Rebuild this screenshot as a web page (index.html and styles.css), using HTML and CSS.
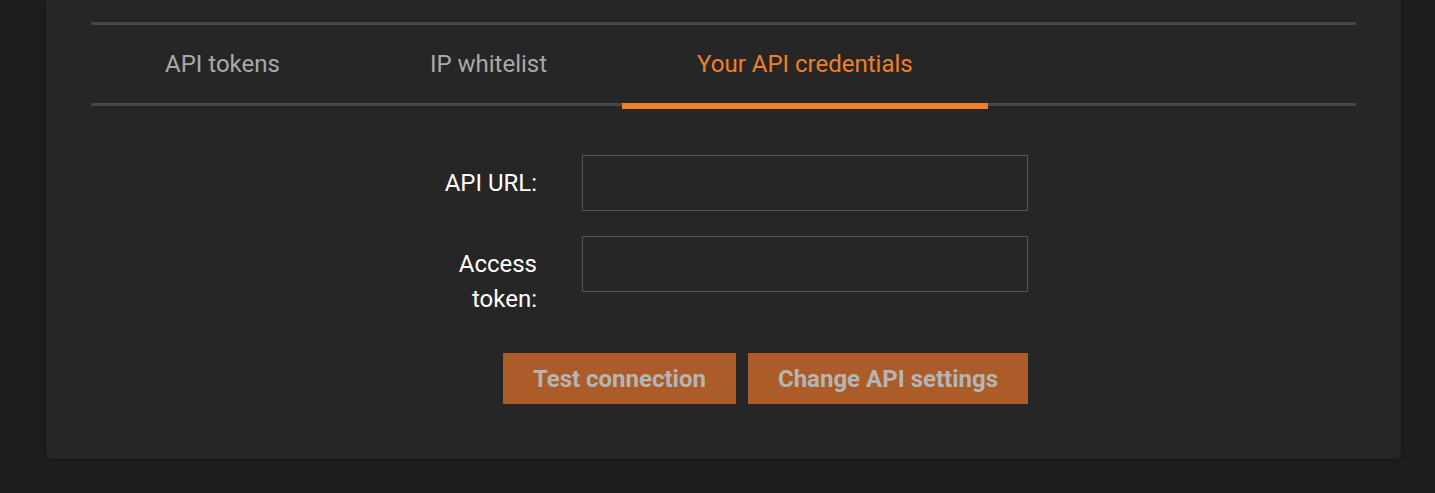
FILE: index.html
```html
<!DOCTYPE html>
<html lang="en">
<head>
    <meta charset="UTF-8">
    <meta name="viewport" content="width=device-width, initial-scale=1.0">
    <title>API settings</title>
    <link rel="stylesheet" href="styles.css">
</head>
<body>
    <div class="page">
        <div class="card">
            <div class="tabs">
                <div class="tab">API tokens</div>
                <div class="tab">IP whitelist</div>
                <div class="tab active">Your API credentials</div>
            </div>
            <div class="form">
                <label class="form-label" for="api-url">API URL:</label>
                <input class="form-input" type="text" id="api-url">
                <label class="form-label" for="access-token">Access token:</label>
                <input class="form-input" type="text" id="access-token">
            </div>
            <div class="actions">
                <button class="btn">Test connection</button>
                <button class="btn">Change API settings</button>
            </div>
        </div>
    </div>
</body>
</html>
```

FILE: styles.css
```css
body {
    margin: 0;
    background-color: #1e1e1e;
    font-family: Roboto, "Liberation Sans", sans-serif;
    height: 493px;
    overflow: hidden;
}
.page {
    padding: 0 34px 34px 46px;
}
.card {
    background-color: #262626;
    border-radius: 0 0 6px 6px;
    box-shadow: 0 1px 4px rgba(0, 0, 0, 0.35);
    padding: 22px 45px 55px;
}
.tabs {
    display: flex;
    border-top: 3px solid #474747;
    border-bottom: 3px solid #474747;
}
.tab {
    position: relative;
    height: 78px;
    line-height: 78px;
    padding: 0 75px;
    font-size: 24px;
    color: #a9a9a9;
    white-space: nowrap;
}
.tab:first-child {
    padding-left: 74px;
}
.tab.active {
    color: #f07f2a;
}
.tab.active::after {
    content: "";
    position: absolute;
    left: 0;
    right: 0;
    bottom: -6px;
    height: 6px;
    background-color: #f07f2a;
}
.form {
    display: grid;
    grid-template-columns: 118px 446px;
    column-gap: 45px;
    row-gap: 25px;
    justify-content: center;
    margin-top: 49px;
}
.form-label {
    text-align: right;
    color: #ffffff;
    font-size: 24px;
    line-height: 35px;
    padding-top: 11px;
}
.form-input {
    box-sizing: border-box;
    height: 56px;
    width: 100%;
    background-color: #262626;
    border: 1px solid #555555;
    border-radius: 0;
    outline: none;
    color: #ffffff;
    font-family: inherit;
    font-size: 20px;
    padding: 0 12px;
}
.actions {
    display: flex;
    justify-content: flex-end;
    gap: 12px;
    width: 609px;
    margin: 36px auto 0;
}
.btn {
    height: 51px;
    padding: 0 30px;
    border: none;
    border-radius: 0;
    background-color: #ab5c28;
    color: #b5b5b5;
    font-family: inherit;
    font-size: 24px;
    font-weight: bold;
    white-space: nowrap;
    cursor: pointer;
}
```
